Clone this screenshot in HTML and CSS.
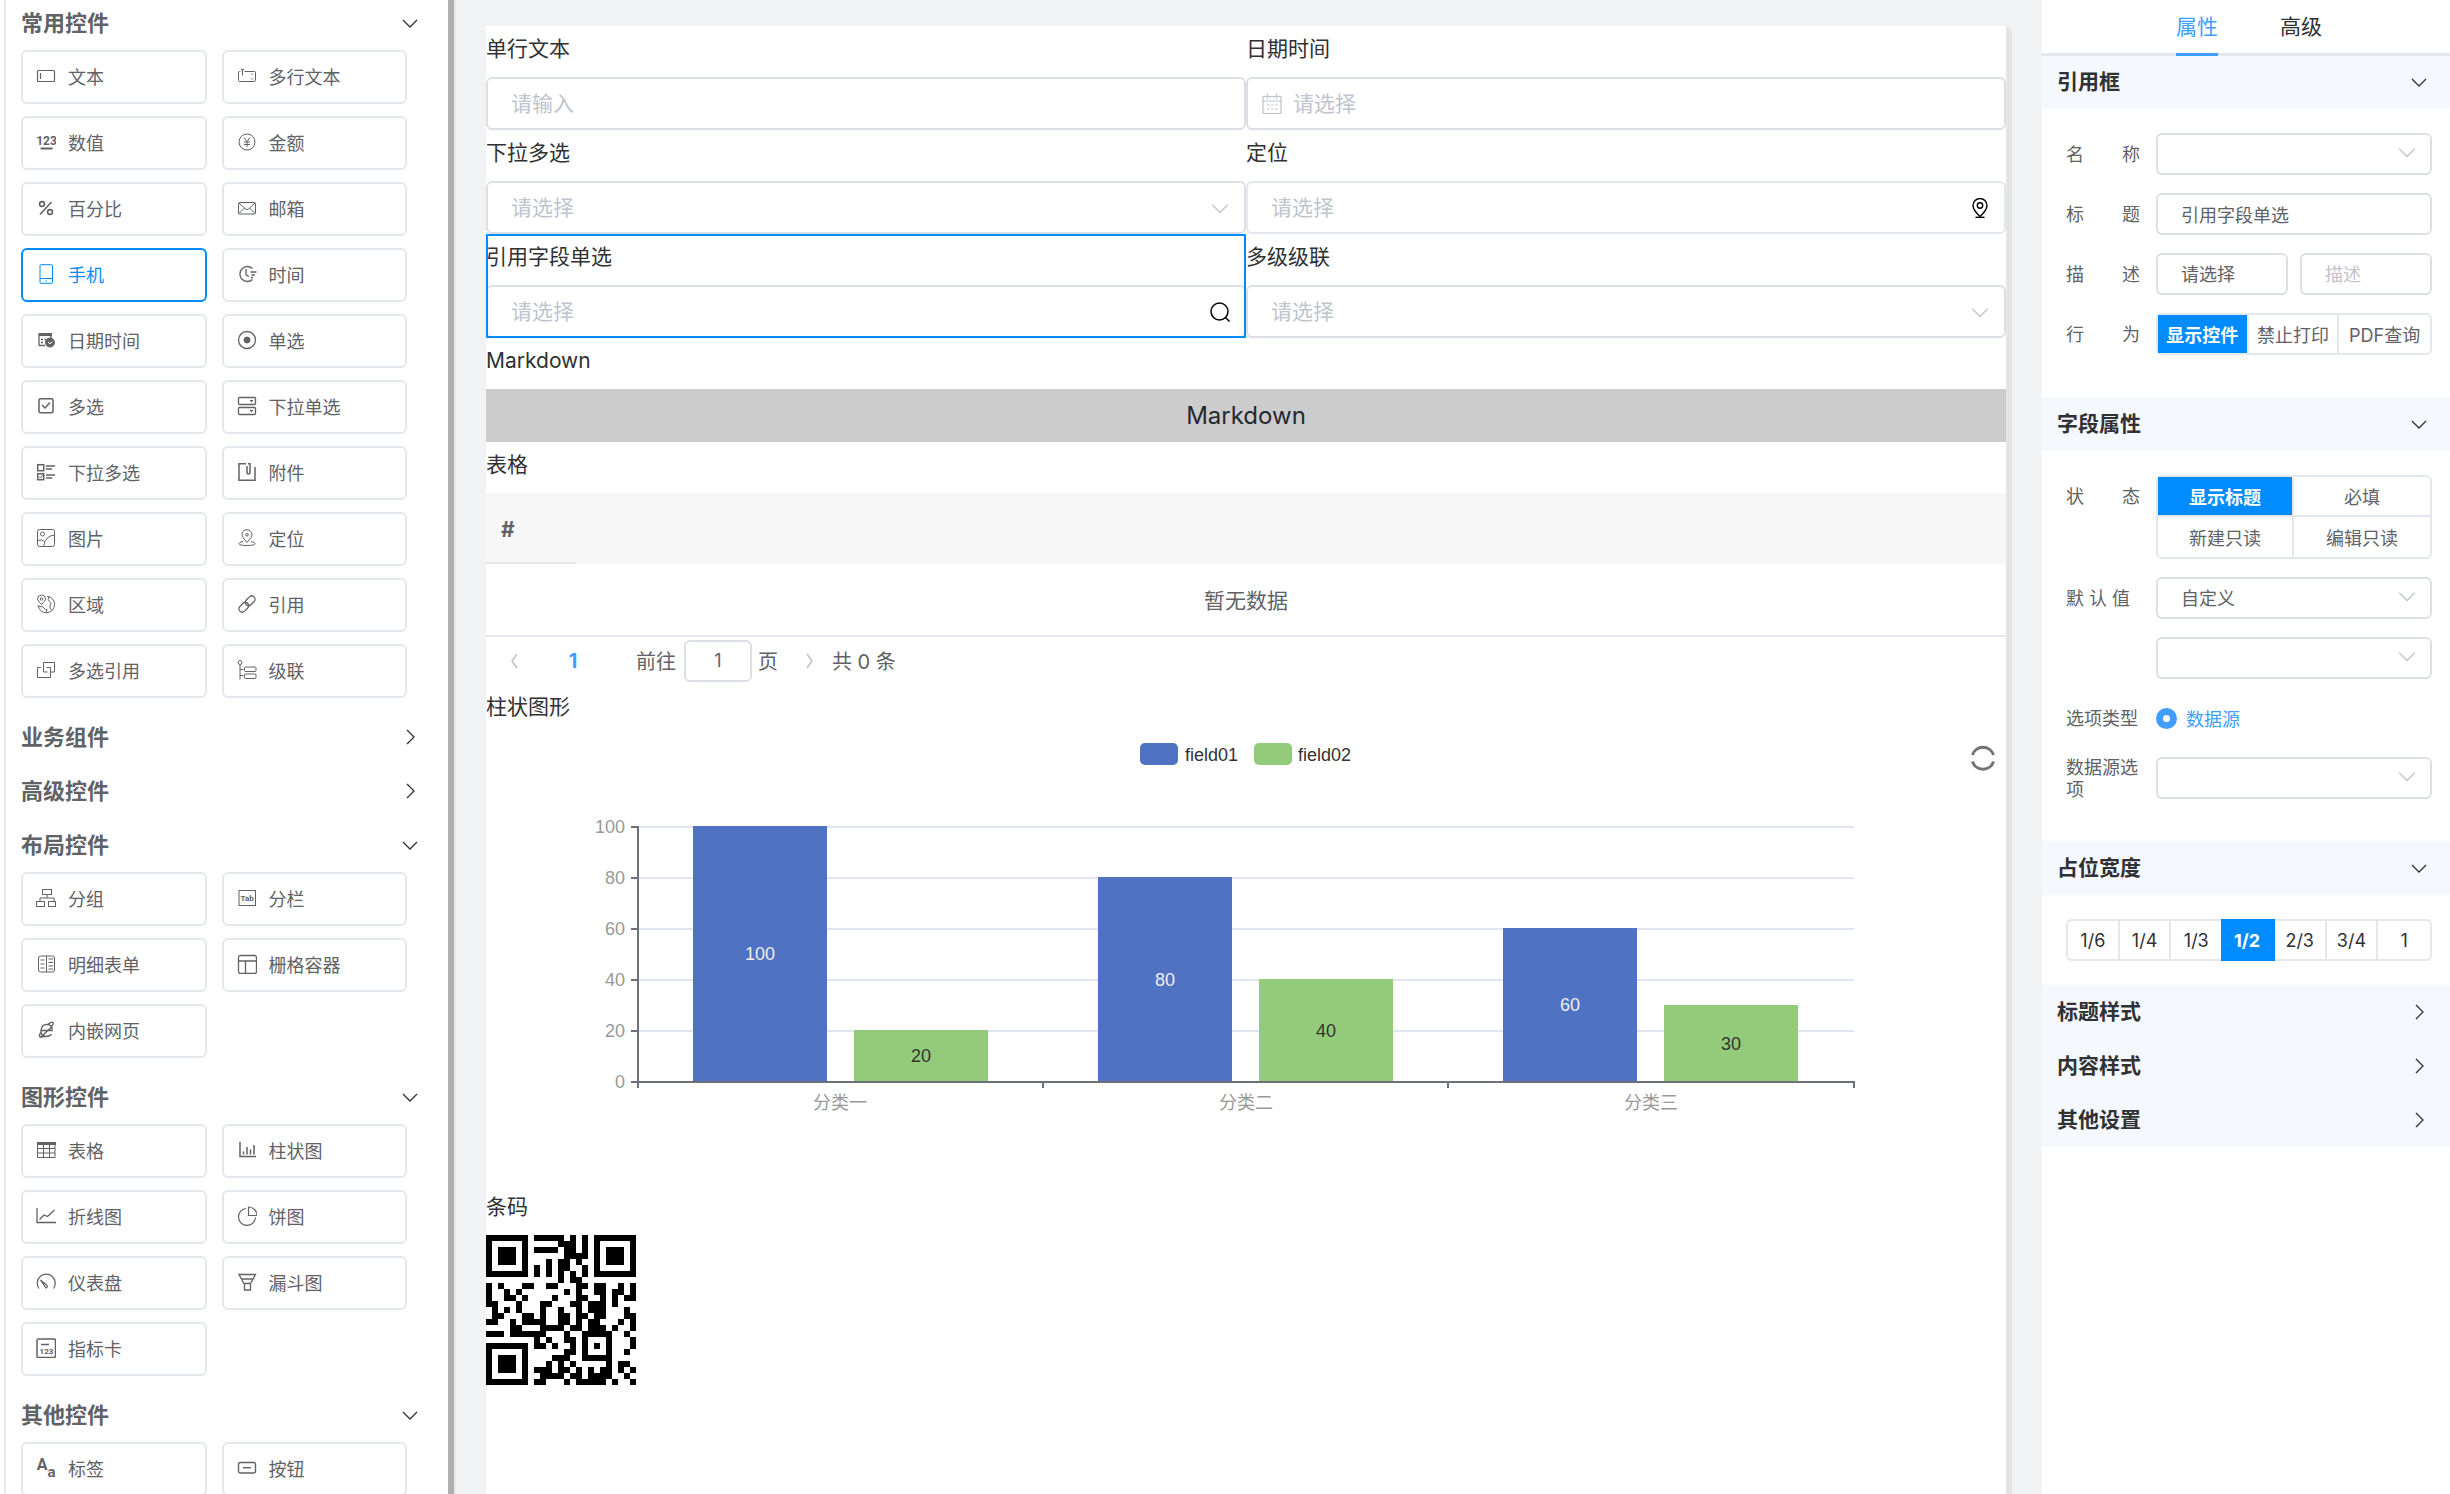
FILE: index.html
```html
<!DOCTYPE html>
<html lang="zh-CN">
<head>
<meta charset="utf-8">
<title>表单设计器</title>
<link rel="stylesheet" href="styles.css">
</head>
<body>
<svg class="sprite" aria-hidden="true">
  <symbol id="i-down" viewBox="0 0 16 16"><path d="M1 5l7 7 7-7"/></symbol>
  <symbol id="i-right" viewBox="0 0 16 16"><path d="M5 1l7 7-7 7"/></symbol>
  <symbol id="i-left" viewBox="0 0 16 16"><path d="M11 1L6 8l5 7"/></symbol>
  <symbol id="i-text" viewBox="0 0 20 20"><g stroke-width="1.200"><rect x="1.500" y="4.500" width="17" height="11" rx="1"/><path d="M4.500 7v6"/></g></symbol>
  <symbol id="i-textarea" viewBox="0 0 20 20"><path d="M3.500 5.500h-1q-1 0-1 1v8q0 1 1 1h15q1 0 1-1v-8q0-1-1-1h-10M4 3.500h3M5.500 3.500v6"/><path d="M13.500 9l1.500-1.500 1.500 1.500M13.500 12l1.500 1.500 1.500-1.500" opacity=".6"/></symbol>
  <symbol id="i-number" viewBox="0 0 20 20"><text x="10.500" y="12.500" class="glyph glyph-narrow" font-size="12">123</text><path d="M4.500 16.500h12" stroke-width="2"/></symbol>
  <symbol id="i-money" viewBox="0 0 20 20"><circle cx="10" cy="10" r="8"/><path d="M7 5.500l3 4 3-4M10 9.500v5.500M7 10h6M7 12.500h6"/></symbol>
  <symbol id="i-percent" viewBox="0 0 20 20"><g stroke-width="1.600"><circle cx="6" cy="6" r="2.400"/><circle cx="14" cy="14" r="2.400"/><path d="M15.500 4L4 16.500"/></g></symbol>
  <symbol id="i-mail" viewBox="0 0 20 20"><rect x="1.500" y="4.500" width="17" height="11.500" rx="1"/><path d="M2 5l6.500 6q1.500 1.200 3 0L18 5M2 15.500L7.500 10M18 15.500L12.500 10"/></symbol>
  <symbol id="i-phone" viewBox="0 0 20 20"><rect x="4" y=".7" width="12.500" height="18.600" rx="1"/><path d="M4 14.500h12.500M9.500 17h1.500"/></symbol>
  <symbol id="i-clock" viewBox="0 0 20 20"><g stroke-width="1.300"><path d="M15.500 4.500A7.500 7.500 0 1 0 15.500 15.500M9 5v6l3 1.500M13.500 8h6M14.500 11h3.500M14 13.500h2"/></g></symbol>
  <symbol id="i-datetime" viewBox="0 0 20 20"><path d="M3 15.500V4h12v5M3 15.500h6" stroke-width="1.300"/><path d="M3 4.500h13" stroke-width="3"/><path d="M5 9.500h2M8.500 9.500h2M5 12.500h2" stroke-width="1.500"/><circle cx="14" cy="12.500" r="4.500" fill="currentColor"/><path d="M12 12l2 2 2.500-2.500" stroke="#fff"/></symbol>
  <symbol id="i-radio" viewBox="0 0 20 20"><circle cx="10" cy="10" r="8.500" stroke-width="1.300"/><circle cx="10" cy="10" r="3" fill="currentColor"/></symbol>
  <symbol id="i-check" viewBox="0 0 20 20"><g stroke-width="1.500"><rect x="3" y="2.700" width="14" height="14" rx="1.500"/><path d="M6 9l3 3 5-5.500"/></g></symbol>
  <symbol id="i-select" viewBox="0 0 20 20"><g stroke-width="1.300"><rect x="1.500" y="1.500" width="17" height="7" rx="1"/><rect x="1.500" y="11.500" width="17" height="7" rx="1"/></g><path d="M12.500 4h4l-2 2.500zM12.500 14h4l-2 2.500z" fill="currentColor" stroke="none"/></symbol>
  <symbol id="i-multi" viewBox="0 0 20 20"><g stroke-width="1.500"><rect x="1.700" y="2.700" width="6" height="6"/><rect x="1.700" y="11.700" width="6" height="6"/><path d="M10 4h9M10 7h6M10 13h9M10 16h6"/></g><path d="M3 14.500l1.500 1.500L7 13"/></symbol>
  <symbol id="i-attach" viewBox="0 0 20 20"><g stroke-width="1.500"><path d="M9 1.700H2v16.600h16V5M10 4v6q0 2 1.500 2t1.500-2V1.700h-2"/></g></symbol>
  <symbol id="i-image" viewBox="0 0 20 20"><rect x="1.500" y="1.500" width="17" height="17" rx="2"/><circle cx="6.500" cy="6" r="2"/><path d="M7.500 18.500Q9 8 18.500 7M1.500 12.500q5-1.500 7 1"/></symbol>
  <symbol id="i-location" viewBox="0 0 20 20"><path d="M10 14.500Q5 9 5 6.700a5 5 0 0 1 10 0Q15 9 10 14.500z"/><circle cx="10" cy="6.800" r="1.300"/><path d="M6 13.500q-4 .7-4 2 0 2 8 2t8-2q0-1.300-4-2"/></symbol>
  <symbol id="i-region" viewBox="0 0 20 20"><path d="M5.500 10.500Q1.500 6.500 1.500 5a4 4 0 0 1 8 0Q9.500 6.500 5.500 10.500z"/><circle cx="5.500" cy="5" r="1.200"/><path d="M11 2.200a8.300 8.300 0 1 1-9 9M13 3q-2 3 .5 4.500T14 12q-1 2 1.500 4M3 12.500q4-.5 5 1.500t3 1.500l-1 3"/></symbol>
  <symbol id="i-link" viewBox="0 0 20 20"><g stroke-width="1.300"><rect x="-5.500" y="-3.300" width="11" height="6.600" rx="3.300" transform="translate(13.200 6.800) rotate(-45)"/><rect x="-5.500" y="-3.300" width="11" height="6.600" rx="3.300" transform="translate(6.800 13.200) rotate(-45)"/></g></symbol>
  <symbol id="i-multiref" viewBox="0 0 20 20"><path d="M7.500 7.500v-5h11v9.500h-3.500M7.500 7.500v4.500h4M5 7.500H1.500v10H14.500V7.500h-4"/></symbol>
  <symbol id="i-cascade" viewBox="0 0 20 20"><circle cx="3" cy="2.500" r="2"/><path d="M3 4.500v15M3 9.500h3.500M3 15.500h3.500"/><rect x="7.500" y="7" width="11.500" height="4.500" rx="1"/><rect x="7.500" y="14" width="11.500" height="4.500" rx="1"/></symbol>
  <symbol id="i-group" viewBox="0 0 20 20"><rect x="6.500" y="1.500" width="9" height="5"/><path d="M11 6.500v3.500M4 13.500V10h14v3.500"/><rect x=".5" y="13.500" width="8" height="5"/><rect x="12.500" y="13.500" width="7" height="5"/></symbol>
  <symbol id="i-tab" viewBox="0 0 20 20"><rect x="2" y="2.500" width="16.500" height="15"/><text x="10.200" y="13" class="glyph" font-size="8">Tab</text></symbol>
  <symbol id="i-detail" viewBox="0 0 20 20"><rect x="2.500" y="2" width="16" height="16" rx="2"/><path d="M10.500 2v16M4.500 6h4M4.500 10h4M4.500 14h4M12.500 5h4.500M12.500 8.500h4.500M12.500 12h4.500M12.500 15h4.500"/></symbol>
  <symbol id="i-grid" viewBox="0 0 20 20"><rect x="1.500" y="1.500" width="18" height="18" rx="2" stroke-width="1.300"/><path d="M1.500 7h18M8.500 7v12.500" stroke-width="1.300"/></symbol>
  <symbol id="i-web" viewBox="0 0 20 20"><g stroke-width="1.400"><path d="M5 10.500h11Q16.500 4.500 11 4.500T5 10.500t5 6q4 0 5.500-2.500M5 12q-2.500 4-1 5t5-1.500M12 4q4-2.500 5-1.500t-2 5L5 17"/></g></symbol>
  <symbol id="i-table" viewBox="0 0 20 20"><path d="M1 3.500h19" stroke-width="3"/><path d="M1.500 2v15.500h17.500V2M7.500 4v13.500M13.500 4v13.500M1.500 8.500h17.500M1.500 13h17.500"/></symbol>
  <symbol id="i-bar" viewBox="0 0 20 20"><g stroke-width="1.500"><path d="M3 2v14.500h16M6.500 14.500v-3M10 14.500V7M13.500 14.500v-5M17 14.500V5"/></g></symbol>
  <symbol id="i-line" viewBox="0 0 20 20"><g stroke-width="1.300"><path d="M1 2v14.500h19M3.500 13.500L8 9l3.500 1.500L18.500 4"/></g></symbol>
  <symbol id="i-pie" viewBox="0 0 20 20"><g stroke-width="1.200"><path d="M9 2.500a8.500 8.500 0 1 0 9.500 9"/><path d="M11.500 1v8.500h8.500A8.500 8.500 0 0 0 11.500 1z"/></g></symbol>
  <symbol id="i-gauge" viewBox="0 0 20 20"><g stroke-width="1.200"><path d="M3 16.500A9 9 0 1 1 17.500 16.500"/><path d="M4.500 8l6.500 5.500q1 2-1 2.500z"/></g></symbol>
  <symbol id="i-funnel" viewBox="0 0 20 20"><g stroke-width="1.300"><path d="M2 2.500h16.500L13.500 11.500h-6.500zM4.500 7h11.500M7.500 11.500v6.500h6v-6.500"/></g></symbol>
  <symbol id="i-card" viewBox="0 0 20 20"><rect x="1" y="1" width="18.500" height="18.500" rx="1.500" stroke-width="1.500"/><path d="M5 6.500h8" stroke-width="1.500"/><text x="10.500" y="16" class="glyph" font-size="8">123</text></symbol>
  <symbol id="i-label" viewBox="0 0 20 20"><text x="6" y="12" class="glyph" font-size="16">A</text><text x="15.500" y="19" class="glyph" font-size="15">a</text></symbol>
  <symbol id="i-button" viewBox="0 0 20 20"><g stroke-width="1.400"><rect x="1.500" y="4.500" width="17" height="10.500" rx="2"/><path d="M6 9.700h8"/></g></symbol>
  <symbol id="i-calendar" viewBox="0 0 20 20"><rect x="1" y="2.500" width="18" height="17"/><path d="M1 7h18M5.500 0v5M14.500 0v5M5 11h2.500M9 11h2.500M13 11h2.500M5 15h2.500M9 15h2.500M13 15h2.500"/></symbol>
  <symbol id="i-search" viewBox="0 0 20 20"><circle cx="9.500" cy="9.500" r="8.500" stroke-width="1.500"/><path d="M15.500 15.500l4 4" stroke-width="1.500"/></symbol>
  <symbol id="i-pin" viewBox="0 0 20 20"><g stroke-width="1.400"><path d="M10 18.500Q3 12 3 7.500a7 7 0 0 1 14 0Q17 12 10 18.500z"/><circle cx="10" cy="7.500" r="2.700"/><path d="M5.500 19.300h9"/></g></symbol>
</svg>

<div class="app">
  <aside class="palette" aria-label="控件">
    <div class="palette-list">
      <section>
        <h2><button class="palette-head" type="button">常用控件<svg class="chev"><use href="#i-down"/></svg></button></h2>
        <div class="tiles">
          <button class="tile" type="button"><svg class="ico"><use href="#i-text"/></svg>文本</button>
          <button class="tile" type="button"><svg class="ico"><use href="#i-textarea"/></svg>多行文本</button>
          <button class="tile" type="button"><svg class="ico"><use href="#i-number"/></svg>数值</button>
          <button class="tile" type="button"><svg class="ico"><use href="#i-money"/></svg>金额</button>
          <button class="tile" type="button"><svg class="ico"><use href="#i-percent"/></svg>百分比</button>
          <button class="tile" type="button"><svg class="ico"><use href="#i-mail"/></svg>邮箱</button>
          <button class="tile tile-active" type="button"><svg class="ico"><use href="#i-phone"/></svg>手机</button>
          <button class="tile" type="button"><svg class="ico"><use href="#i-clock"/></svg>时间</button>
          <button class="tile" type="button"><svg class="ico"><use href="#i-datetime"/></svg>日期时间</button>
          <button class="tile" type="button"><svg class="ico"><use href="#i-radio"/></svg>单选</button>
          <button class="tile" type="button"><svg class="ico"><use href="#i-check"/></svg>多选</button>
          <button class="tile" type="button"><svg class="ico"><use href="#i-select"/></svg>下拉单选</button>
          <button class="tile" type="button"><svg class="ico"><use href="#i-multi"/></svg>下拉多选</button>
          <button class="tile" type="button"><svg class="ico"><use href="#i-attach"/></svg>附件</button>
          <button class="tile" type="button"><svg class="ico"><use href="#i-image"/></svg>图片</button>
          <button class="tile" type="button"><svg class="ico"><use href="#i-location"/></svg>定位</button>
          <button class="tile" type="button"><svg class="ico"><use href="#i-region"/></svg>区域</button>
          <button class="tile" type="button"><svg class="ico"><use href="#i-link"/></svg>引用</button>
          <button class="tile" type="button"><svg class="ico"><use href="#i-multiref"/></svg>多选引用</button>
          <button class="tile" type="button"><svg class="ico"><use href="#i-cascade"/></svg>级联</button>
        </div>
      </section>
      <section>
        <h2><button class="palette-head" type="button">业务组件<svg class="chev"><use href="#i-right"/></svg></button></h2>
      </section>
      <section>
        <h2><button class="palette-head" type="button">高级控件<svg class="chev"><use href="#i-right"/></svg></button></h2>
      </section>
      <section>
        <h2><button class="palette-head" type="button">布局控件<svg class="chev"><use href="#i-down"/></svg></button></h2>
        <div class="tiles">
          <button class="tile" type="button"><svg class="ico"><use href="#i-group"/></svg>分组</button>
          <button class="tile" type="button"><svg class="ico"><use href="#i-tab"/></svg>分栏</button>
          <button class="tile" type="button"><svg class="ico"><use href="#i-detail"/></svg>明细表单</button>
          <button class="tile" type="button"><svg class="ico"><use href="#i-grid"/></svg>栅格容器</button>
          <button class="tile" type="button"><svg class="ico"><use href="#i-web"/></svg>内嵌网页</button>
        </div>
      </section>
      <section>
        <h2><button class="palette-head" type="button">图形控件<svg class="chev"><use href="#i-down"/></svg></button></h2>
        <div class="tiles">
          <button class="tile" type="button"><svg class="ico"><use href="#i-table"/></svg>表格</button>
          <button class="tile" type="button"><svg class="ico"><use href="#i-bar"/></svg>柱状图</button>
          <button class="tile" type="button"><svg class="ico"><use href="#i-line"/></svg>折线图</button>
          <button class="tile" type="button"><svg class="ico"><use href="#i-pie"/></svg>饼图</button>
          <button class="tile" type="button"><svg class="ico"><use href="#i-gauge"/></svg>仪表盘</button>
          <button class="tile" type="button"><svg class="ico"><use href="#i-funnel"/></svg>漏斗图</button>
          <button class="tile" type="button"><svg class="ico"><use href="#i-card"/></svg>指标卡</button>
        </div>
      </section>
      <section>
        <h2><button class="palette-head" type="button">其他控件<svg class="chev"><use href="#i-down"/></svg></button></h2>
        <div class="tiles">
          <button class="tile" type="button"><svg class="ico"><use href="#i-label"/></svg>标签</button>
          <button class="tile" type="button"><svg class="ico"><use href="#i-button"/></svg>按钮</button>
        </div>
      </section>
    </div>
  </aside>

  <main class="stage">
    <div class="paper">
      <div class="fields">
        <div class="field">
          <label for="f-text">单行文本</label>
          <div class="control"><input id="f-text" type="text" placeholder="请输入"></div>
        </div>
        <div class="field">
          <label for="f-date">日期时间</label>
          <div class="control control-prefixed"><input id="f-date" type="text" placeholder="请选择"><svg class="prefix"><use href="#i-calendar"/></svg></div>
        </div>
        <div class="field">
          <label for="f-multi">下拉多选</label>
          <div class="control"><select id="f-multi" class="empty"><option>请选择</option></select><svg class="suffix"><use href="#i-down"/></svg></div>
        </div>
        <div class="field">
          <label for="f-loc">定位</label>
          <div class="control control-light"><input id="f-loc" type="text" placeholder="请选择"><svg class="suffix suffix-dark"><use href="#i-pin"/></svg></div>
        </div>
        <div class="field field-selected">
          <label for="f-ref">引用字段单选</label>
          <div class="control"><input id="f-ref" type="text" placeholder="请选择"><svg class="suffix suffix-dark"><use href="#i-search"/></svg></div>
        </div>
        <div class="field">
          <label for="f-casc">多级级联</label>
          <div class="control"><select id="f-casc" class="empty"><option>请选择</option></select><svg class="suffix"><use href="#i-down"/></svg></div>
        </div>
      </div>

      <section>
        <h3>Markdown</h3>
        <div class="markdown">Markdown</div>
      </section>

      <section>
        <h3>表格</h3>
        <table class="data">
          <thead><tr><th class="index">#</th><th></th></tr></thead>
          <tbody><tr><td colspan="2">暂无数据</td></tr></tbody>
        </table>
        <nav class="pager" aria-label="分页">
          <button type="button" aria-label="上一页"><svg class="chev"><use href="#i-left"/></svg></button>
          <a class="page" href="#p1">1</a>
          <label for="goto">前往</label>
          <input id="goto" type="text" value="1">
          <span>页</span>
          <button class="next" type="button" aria-label="下一页"><svg class="chev"><use href="#i-left"/></svg></button>
          <span>共 0 条</span>
        </nav>
      </section>

      <section>
        <h3>柱状图形</h3>
        <svg class="chart" viewBox="0 0 1520 449" role="img" aria-label="柱状图形">
          <rect x="654" y="8" width="38" height="22" rx="5" fill="#4f72c2"/>
          <text x="699" y="26" class="legend">field01</text>
          <rect x="768" y="8" width="38" height="22" rx="5" fill="#94cb7b"/>
          <text x="812" y="26" class="legend">field02</text>
          <path class="refresh" d="M1486.500 20a11 11 0 0 1 21 0M1486.500 26.500a11 11 0 0 0 21 0"/>
          <path class="gridline" d="M152 92h1216M152 143h1216M152 194h1216M152 245h1216M152 296h1216"/>
          <g fill="#4f72c2">
            <rect x="207" y="91" width="134" height="256"/>
            <rect x="612" y="142" width="134" height="205"/>
            <rect x="1017" y="193" width="134" height="154"/>
          </g>
          <g fill="#94cb7b">
            <rect x="368" y="295" width="134" height="52"/>
            <rect x="773" y="244" width="134" height="103"/>
            <rect x="1178" y="270" width="134" height="77"/>
          </g>
          <path class="axis" d="M152 91v262M145 92h7M145 143h7M145 194h7M145 245h7M145 296h7M145 347h1223v6M557 347v6M962 347v6"/>
          <g class="ylabel">
            <text x="139" y="98">100</text><text x="139" y="149">80</text><text x="139" y="200">60</text>
            <text x="139" y="251">40</text><text x="139" y="302">20</text><text x="139" y="353">0</text>
          </g>
          <g class="xlabel">
            <text x="354" y="374">分类一</text><text x="760" y="374">分类二</text><text x="1165" y="374">分类三</text>
          </g>
          <g class="value value-light">
            <text x="274" y="225">100</text><text x="679" y="251">80</text><text x="1084" y="276">60</text>
          </g>
          <g class="value">
            <text x="435" y="327">20</text><text x="840" y="302">40</text><text x="1245" y="315">30</text>
          </g>
        </svg>
      </section>

      <section>
        <h3>条码</h3>
        <svg class="qr" viewBox="0 0 25 25" role="img" aria-label="二维码">
          <path d="M0 .5h7M8 .5h5M14 .5h1M16 .5h1M18 .5h7
            M0 1.500h1M6 1.500h1M12 1.500h3M16 1.500h1M18 1.500h1M24 1.500h1
            M0 2.500h1M2 2.500h3M6 2.500h1M8 2.500h4M13 2.500h2M16 2.500h1M18 2.500h1M20 2.500h3M24 2.500h1
            M0 3.500h1M2 3.500h3M6 3.500h1M13 3.500h3M16 3.500h1M18 3.500h1M20 3.500h3M24 3.500h1
            M0 4.500h1M2 4.500h3M6 4.500h1M10 4.500h1M12 4.500h2M15 4.500h1M18 4.500h1M20 4.500h3M24 4.500h1
            M0 5.500h1M6 5.500h1M8 5.500h1M10 5.500h1M12 5.500h2M16 5.500h1M18 5.500h1M24 5.500h1
            M0 6.500h7M8 6.500h1M10 6.500h1M12 6.500h1M14 6.500h1M16 6.500h1M18 6.500h7
            M12 7.500h1M14 7.500h2
            M0 8.500h1M2 8.500h1M6 8.500h2M10 8.500h2M15 8.500h2M18 8.500h2M22 8.500h1M24 8.500h1
            M0 9.500h1M3 9.500h1M5 9.500h1M13 9.500h1M15 9.500h1M18 9.500h2M21 9.500h2M24 9.500h1
            M0 10.500h1M3 10.500h2M6 10.500h1M11 10.500h1M15 10.500h2M19 10.500h1M21 10.500h1M23 10.500h2
            M0 11.500h2M5 11.500h1M9 11.500h2M14 11.500h2M17 11.500h3M21 11.500h1
            M1 12.500h1M3 12.500h1M5 12.500h1M9 12.500h1M12 12.500h1M15 12.500h1M17 12.500h3M23 12.500h1
            M1 13.500h2M6 13.500h2M9 13.500h1M12 13.500h2M15 13.500h2M18 13.500h2M23 13.500h2
            M0 14.500h2M4 14.500h1M6 14.500h4M12 14.500h2M15 14.500h1M17 14.500h2M22 14.500h1M24 14.500h1
            M4 15.500h2M9 15.500h4M14 15.500h2M17 15.500h3M21 15.500h1M24 15.500h1
            M0 16.500h3M4 16.500h6M13 16.500h1M16 16.500h5M23 16.500h1
            M8 17.500h1M10 17.500h1M13 17.500h2M16 17.500h1M20 17.500h1M24 17.500h1
            M0 18.500h7M8 18.500h2M11 18.500h1M14 18.500h1M16 18.500h1M18 18.500h1M20 18.500h1M24 18.500h1
            M0 19.500h1M6 19.500h1M13 19.500h2M16 19.500h1M20 19.500h1M23 19.500h1
            M0 20.500h1M2 20.500h3M6 20.500h1M11 20.500h3M16 20.500h5
            M0 21.500h1M2 21.500h3M6 21.500h1M10 21.500h1M12 21.500h1M14 21.500h1M20 21.500h1M22 21.500h2
            M0 22.500h1M2 22.500h3M6 22.500h1M8 22.500h3M12 22.500h2M15 22.500h1M17 22.500h1M19 22.500h2M22 22.500h1M24 22.500h1
            M0 23.500h1M6 23.500h1M9 23.500h4M14 23.500h2M17 23.500h4M23 23.500h1
            M0 24.500h7M8 24.500h2M13 24.500h1M15 24.500h5M21 24.500h1M24 24.500h1"/>
        </svg>
      </section>
    </div>
  </main>

  <aside class="props" aria-label="属性">
    <nav class="tabs">
      <a class="tab tab-active" href="#attr">属性</a>
      <a class="tab" href="#adv">高级</a>
    </nav>

    <section>
      <h2><button class="props-head" type="button">引用框<svg class="chev"><use href="#i-down"/></svg></button></h2>
      <div class="rows">
        <div class="row">
          <label class="spread" for="p-name">名 称</label>
          <div class="box"><select id="p-name"><option></option></select><svg class="suffix"><use href="#i-down"/></svg></div>
        </div>
        <div class="row">
          <label class="spread" for="p-title">标 题</label>
          <div class="box"><input id="p-title" type="text" value="引用字段单选"></div>
        </div>
        <div class="row">
          <label class="spread" for="p-desc">描 述</label>
          <div class="box"><select id="p-desc"><option>请选择</option></select></div>
          <div class="box"><input type="text" placeholder="描述" aria-label="描述"></div>
        </div>
        <div class="row">
          <span class="spread">行 为</span>
          <div class="seg seg-3">
            <button class="on" type="button">显示控件</button><button type="button">禁止打印</button><button type="button">PDF查询</button>
          </div>
        </div>
      </div>
    </section>

    <section>
      <h2><button class="props-head" type="button">字段属性<svg class="chev"><use href="#i-down"/></svg></button></h2>
      <div class="rows">
        <div class="row">
          <span class="spread">状 态</span>
          <div class="seg seg-2">
            <button class="on" type="button">显示标题</button><button type="button">必填</button>
            <button type="button">新建只读</button><button type="button">编辑只读</button>
          </div>
        </div>
        <div class="row">
          <label for="p-default">默 认 值</label>
          <div class="box"><select id="p-default"><option>自定义</option></select><svg class="suffix"><use href="#i-down"/></svg></div>
        </div>
        <div class="row">
          <span></span>
          <div class="box"><select aria-label="默认值内容"><option></option></select><svg class="suffix"><use href="#i-down"/></svg></div>
        </div>
        <div class="row">
          <span>选项类型</span>
          <label class="choice"><input type="radio" name="source" checked>数据源</label>
        </div>
        <div class="row">
          <label class="wrapped" for="p-source">数据源选项</label>
          <div class="box"><select id="p-source"><option></option></select><svg class="suffix"><use href="#i-down"/></svg></div>
        </div>
      </div>
    </section>

    <section>
      <h2><button class="props-head" type="button">占位宽度<svg class="chev"><use href="#i-down"/></svg></button></h2>
      <div class="rows rows-single">
        <div class="seg seg-7">
          <button type="button">1/6</button><button type="button">1/4</button><button type="button">1/3</button><button class="on" type="button">1/2</button><button type="button">2/3</button><button type="button">3/4</button><button type="button">1</button>
        </div>
      </div>
    </section>
    <section><h2><button class="props-head" type="button">标题样式<svg class="chev"><use href="#i-right"/></svg></button></h2></section>
    <section><h2><button class="props-head" type="button">内容样式<svg class="chev"><use href="#i-right"/></svg></button></h2></section>
    <section><h2><button class="props-head" type="button">其他设置<svg class="chev"><use href="#i-right"/></svg></button></h2></section>
  </aside>
</div>
</body>
</html>
```
FILE: styles.css
```css
*, *::before, *::after { box-sizing: border-box; }

body {
  margin: 0;
  font-family: Inter, "Noto Sans CJK SC", sans-serif;
  font-size: 18px;
  color: #606266;
  background: #f2f3f5;
}

h2, h3 { margin: 0; font: inherit; }
button, input, select { font: inherit; color: inherit; margin: 0; }
button { padding: 0; border: 0; background: none; cursor: pointer; }
a { color: inherit; text-decoration: none; }

.sprite { display: none; }
svg { fill: none; stroke: currentColor; stroke-width: 1; flex: none; }
svg text { stroke: none; fill: currentColor; }
.glyph { font-family: Roboto, sans-serif; font-weight: 700; text-anchor: middle; }
.ico { width: 20px; height: 20px; }
.chev { width: 16px; height: 16px; stroke-width: 1.3; }

.app { display: flex; height: 100vh; }

/* control palette */
.palette {
  flex: none;
  width: 450px;
  margin-left: 4px;
  border-left: 2px solid #e7e9ed;
  border-right: 6px solid #b0b0b0;
  background: #fff;
  box-shadow: -4px 0 #fff, 2px 0 #e9eaec;
  overflow: hidden;
}
.palette-list { margin-top: -4px; }
.palette-head, .props-head {
  display: flex;
  align-items: center;
  justify-content: space-between;
  width: 100%;
  height: 54px;
  font-weight: 700;
}
.palette-head { padding: 0 30px 4px 15px; font-size: 22px; }
.palette-head .chev, .props-head .chev { margin-top: 4px; color: #303133; }
.tiles {
  display: grid;
  grid-template-columns: 1fr 1fr;
  gap: 12px 15px;
  padding: 0 41px 12px 15px;
}
.tile {
  display: flex;
  align-items: center;
  gap: 12px;
  height: 54px;
  padding: 0 0 2px 13px;
  border: 2px solid #e4e7eb;
  border-radius: 6px;
  background: #fff;
}
.tile-active { border-color: #008cff; color: #008cff; }

/* form canvas */
.stage { flex: 1; min-width: 0; display: flex; padding: 26px 30px 0 32px; }
.paper {
  flex: 1;
  min-width: 0;
  border-right: 6px solid #e5e5e5;
  border-radius: 0 6px 0 0;
  background: #fff;
  overflow: hidden;
}
.fields { display: grid; grid-template-columns: 1fr 1fr; }
.field-selected { position: relative; }
.field-selected::after {
  content: "";
  position: absolute;
  inset: 0;
  border: 2px solid #008cff;
  pointer-events: none;
}
.field label, .paper h3 {
  display: block;
  height: 51px;
  font-size: 21px;
  line-height: 45px;
  color: #303133;
}
.control { position: relative; height: 53px; font-size: 21px; }
.control input, .control select, .box input, .box select {
  display: block;
  width: 100%;
  height: 100%;
  padding: 0 23px;
  border: 2px solid #dcdfe6;
  border-radius: 6px;
  background: #fff;
  appearance: none;
  outline: 0;
}
.control-prefixed input { padding-left: 45px; }
.control-light input { border-color: #e4e7ed; }
input::placeholder { color: #c0c4cc; opacity: 1; }
.control .empty { color: #c0c4cc; }
.suffix, .prefix {
  position: absolute;
  top: 50%;
  width: 18px;
  height: 20px;
  margin-top: -10px;
  color: #c0c4cc;
  stroke-width: 1.2;
  pointer-events: none;
}
.suffix { right: 17px; }
.suffix-dark { right: 16px; width: 20px; color: #000; }
.prefix { left: 16px; width: 20px; }

.markdown {
  height: 53px;
  background: #ccc;
  color: #24292e;
  font-size: 24px;
  line-height: 53px;
  text-align: center;
}

.data { width: 100%; border-collapse: separate; border-spacing: 0; font-size: 21px; }
.data th { height: 71px; padding: 0; background: #f7f7f7; }
.data .index { width: 90px; padding: 3px 0 0 15px; text-align: left; border-bottom: 2px solid #e8e8ea; }
.data td { height: 73px; padding: 0 0 2px; text-align: center; border-bottom: 2px solid #e8e9ec; }

.pager { display: flex; align-items: center; height: 47px; padding: 0 20px; font-size: 20px; }
.pager button { display: flex; color: #c0c4cc; }
.pager .chev { stroke-width: 1.6; }
.pager .page { width: 102px; text-align: center; color: #409eff; font-weight: 700; }
.pager label { margin: 0 8px 0 12px; }
.pager label + input {
  width: 68px;
  height: 42px;
  margin-right: 6px;
  padding: 0;
  border: 2px solid #dcdfe6;
  border-radius: 6px;
  font-size: 18px;
  text-align: center;
}
.pager .next { margin: 0 14px 0 24px; transform: rotate(180deg); }

.chart { display: block; width: 100%; font-family: "Liberation Sans", "Noto Sans CJK SC", sans-serif; font-size: 18px; }
.chart rect { stroke: none; }
.chart .legend { fill: #333; }
.refresh { stroke: #737373; stroke-width: 3; }
.gridline { stroke: #e0e6f1; stroke-width: 2; }
.axis { stroke: #6e7079; stroke-width: 2; }
.chart .ylabel text { fill: #999; text-anchor: end; }
.chart .xlabel text { fill: #999; text-anchor: middle; }
.chart .value text { fill: #333; text-anchor: middle; }
.chart .value-light text { fill: #eee; }

.qr { display: block; width: 150px; height: 150px; stroke: #000; shape-rendering: crispEdges; }

/* property panel */
.props { flex: none; width: 408px; background: #fff; overflow: hidden; }
.tabs {
  position: relative;
  display: flex;
  gap: 62px;
  height: 56px;
  margin-bottom: -1px;
  padding-left: 134px;
  font-size: 21px;
  line-height: 53px;
  color: #303133;
  box-shadow: inset 0 -3px #e4e7ed;
}
.tab-active { color: #409eff; border-bottom: 3px solid #409eff; }
.props-head {
  padding: 0 23px 4px 15px;
  background: #f5f8fd;
  color: #303133;
  font-size: 21px;
}
.rows { display: flex; flex-direction: column; gap: 18px; padding: 24px 18px 42px 24px; }
.rows-single { padding-bottom: 24px; }
.row { display: flex; gap: 12px; min-height: 42px; }
.row > :first-child { flex: none; width: 74px; margin-right: 4px; line-height: 43px; height: 42px; }
.row > .spread { text-align-last: justify; }
.row > .wrapped { line-height: 22px; }
.box { position: relative; flex: 1; min-width: 0; height: 42px; }
.box .suffix { right: 16px; margin-top: -12px; }

.seg { flex: 1; display: grid; border: 2px solid #e4e7eb; border-radius: 6px; }
.seg-2 { grid-template-columns: 1fr 1fr; }
.seg-3 { grid-template-columns: 1fr 1fr 1fr; }
.seg-7 { grid-template-columns: repeat(7, 1fr); color: #303133; }
.seg button { height: 38px; border-right: 2px solid #e4e7eb; white-space: nowrap; }
.seg button:last-child, .seg-2 button:nth-child(2n) { border-right: 0; }
.seg-2 button { height: 40px; }
.seg-2 button:nth-child(-n+2) { border-bottom: 2px solid #e4e7eb; }
.seg .on { background: #008cff; background-clip: padding-box; color: #fff; font-weight: 700; }
.seg-7 .on { height: 42px; margin: -2px 0 -2px -2px; background-clip: border-box; border-right-color: transparent; }

.choice { display: flex; align-items: center; gap: 9px; color: #409eff; }
.choice input {
  width: 21px;
  height: 21px;
  border: 7px solid #409eff;
  border-radius: 50%;
  background: #fff;
  appearance: none;
}
```
